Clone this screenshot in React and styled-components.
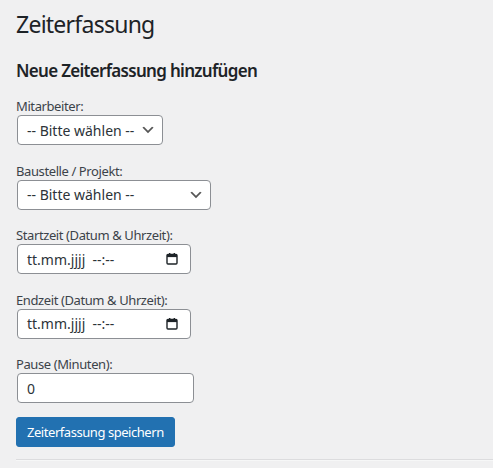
import React from "react";
import styled, { createGlobalStyle } from "styled-components";

const GlobalStyle = createGlobalStyle`
  html, body {
    margin: 0;
    padding: 0;
    background: #f0f0f1;
  }
  body {
    font-family: "Noto Sans", "Open Sans", sans-serif;
    font-size: 13px;
    color: #3c434a;
  }
`;

const ChevronIcon = () => (
  <svg width="16" height="16" viewBox="0 0 20 20">
    <path d="M5 6l5 5 5-5 2 1-7 7-7-7z" fill="#555" />
  </svg>
);

const CalendarIcon = () => (
  <svg width="12" height="12" viewBox="0 0 12 12">
    <rect x="1" y="1.5" width="10" height="9.5" rx="1" fill="none" stroke="#1d2327" strokeWidth="1.4" />
    <rect x="1" y="1.5" width="10" height="2.6" fill="#1d2327" />
    <rect x="3" y="0" width="1.4" height="2" fill="#1d2327" />
    <rect x="7.6" y="0" width="1.4" height="2" fill="#1d2327" />
  </svg>
);

const App = () => {
  return (
    <Wrap>
      <GlobalStyle />
      <Title>Zeiterfassung</Title>
      <SubTitle>Neue Zeiterfassung hinzufügen</SubTitle>
      <Form onSubmit={(e) => e.preventDefault()}>
        <Field>
          <Label>Mitarbeiter:</Label>
          <SelectBox $width={146}>
            <span>-- Bitte wählen --</span>
            <ChevronIcon />
          </SelectBox>
        </Field>
        <Field>
          <Label>Baustelle / Projekt:</Label>
          <SelectBox $width={194}>
            <span>-- Bitte wählen --</span>
            <ChevronIcon />
          </SelectBox>
        </Field>
        <Field>
          <Label>Startzeit (Datum &amp; Uhrzeit):</Label>
          <DateBox>
            <span>tt.mm.jjjj&nbsp; --:--</span>
            <CalendarIcon />
          </DateBox>
        </Field>
        <Field>
          <Label>Endzeit (Datum &amp; Uhrzeit):</Label>
          <DateBox>
            <span>tt.mm.jjjj&nbsp; --:--</span>
            <CalendarIcon />
          </DateBox>
        </Field>
        <Field>
          <Label>Pause (Minuten):</Label>
          <NumberInput type="number" defaultValue={0} />
        </Field>
        <SaveButton type="submit">Zeiterfassung speichern</SaveButton>
      </Form>
      <Divider />
    </Wrap>
  );
};

export default App;

const Wrap = styled.div`
  padding: 0 0 0 16px;
`;

const Title = styled.h1`
  margin: 0;
  padding: 9px 0 4px;
  font-size: 23px;
  font-weight: 400;
  line-height: 30px;
  letter-spacing: -0.75px;
  color: #1d2327;
`;

const SubTitle = styled.h2`
  margin: 17px 0 0;
  font-size: 17px;
  font-weight: 600;
  line-height: 22px;
  letter-spacing: -0.7px;
  color: #1d2327;
`;

const Form = styled.form`
  display: flex;
  flex-direction: column;
  align-items: flex-start;
  padding-top: 15px;
`;

const Field = styled.div`
  display: flex;
  flex-direction: column;
  align-items: flex-start;
  margin-bottom: 16.5px;
`;

const Label = styled.label`
  display: block;
  line-height: 18px;
  letter-spacing: -0.4px;
  color: #3c434a;
`;

const boxBase = `
  box-sizing: border-box;
  height: 30px;
  margin: 0 1px;
  border: 1px solid #8c8f94;
  border-radius: 4px;
  background: #fff;
  color: #2c3338;
  font-family: "Noto Sans", "Open Sans", sans-serif;
  font-size: 14px;
`;

const SelectBox = styled.div`
  ${boxBase}
  width: ${(p) => p.$width}px;
  display: flex;
  align-items: center;
  justify-content: space-between;
  padding: 0 6px 0 9px;
`;

const DateBox = styled.div`
  ${boxBase}
  width: 174px;
  display: flex;
  align-items: center;
  justify-content: space-between;
  padding: 0 12px 0 9px;
`;

const NumberInput = styled.input`
  ${boxBase}
  width: 177px;
  padding: 0 9px;
  outline: none;
`;

const SaveButton = styled.button`
  box-sizing: border-box;
  margin-top: -3px;
  height: 30px;
  padding: 0 10px;
  background: #2271b1;
  border: 1px solid #2271b1;
  border-radius: 3px;
  color: #fff;
  font-family: "Noto Sans", "Open Sans", sans-serif;
  font-size: 13px;
  letter-spacing: -0.45px;
  cursor: pointer;
`;

const Divider = styled.hr`
  margin: 12px 0 0;
  border: 0;
  border-top: 1px solid #dcdcde;
  border-bottom: 1px solid #f6f7f7;
`;
